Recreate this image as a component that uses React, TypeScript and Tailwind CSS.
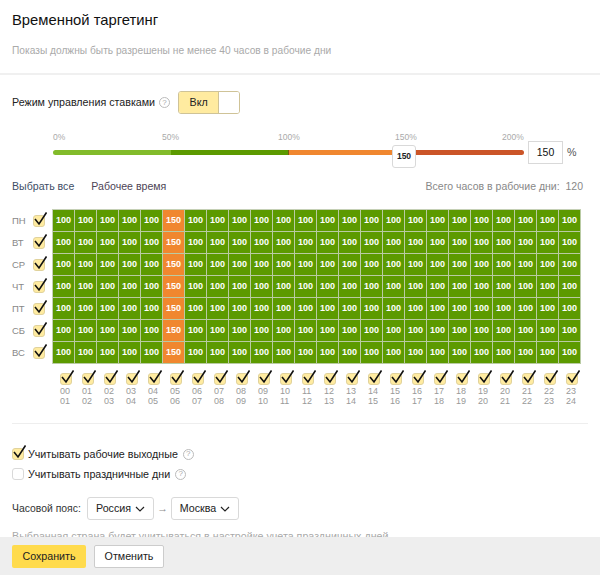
const days = ["ПН", "ВТ", "СР", "ЧТ", "ПТ", "СБ", "ВС"];
const hours = Array.from({ length: 24 }, (_, i) => i);

function pad(n: number) {
  return String(n).padStart(2, "0");
}

function Check({ checked = true }: { checked?: boolean }) {
  return (
    <span
      className={`relative block h-[12px] w-[12px] shrink-0 rounded-[3px] border ${
        checked ? "border-[#e0d29c] bg-[#ffeba0]" : "border-[#d9d9d9] bg-white"
      }`}
    >
      {checked && (
        <svg viewBox="0 0 14 14" className="absolute -top-[4px] -left-[1px] h-[14px] w-[14px]">
          <path d="M2 7 L6 12 L13.5 0.5" fill="none" stroke="#111" strokeWidth="1.6" />
        </svg>
      )}
    </span>
  );
}

function Help() {
  return (
    <span className="flex h-[11px] w-[11px] shrink-0 items-center justify-center rounded-full border border-[#bbb] text-[8px] leading-none text-[#aaa]">
      ?
    </span>
  );
}

function Chevron() {
  return (
    <svg viewBox="0 0 10 6" className="h-[6px] w-[10px]">
      <path d="M1 1 L5 5 L9 1" fill="none" stroke="#222" strokeWidth="1.2" />
    </svg>
  );
}

function Select({ label, width }: { label: string; width: string }) {
  return (
    <span className={`flex h-[23px] items-center justify-center gap-[4px] rounded-[3px] border border-[#d9d9d9] bg-white text-[10.7px] text-[#222] ${width}`}>
      {label}
      <Chevron />
    </span>
  );
}

export default function App() {
  return (
    <div className="flex h-[575px] w-[600px] flex-col overflow-hidden bg-white font-['Liberation_Sans',Arial,sans-serif]">
      <div className="h-[537px] shrink-0 overflow-hidden">
        <div className="h-[75px] border-b-2 border-[#f0f0f0] px-3 pt-[11px]">
          <h1 className="text-[14.8px] leading-[18px] font-normal text-[#111]">Временной таргетинг</h1>
          <p className="mt-[15px] text-[10.2px] leading-[14px] text-[#aaa]">
            Показы должны быть разрешены не менее 40 часов в рабочие дни
          </p>
        </div>

        <div className="mt-[16px] flex items-center px-3">
          <span className="text-[10.7px] text-[#222]">Режим управления ставками</span>
          <span className="ml-[4px]"><Help /></span>
          <span className="ml-[8px] flex h-[23px] w-[62px] overflow-hidden rounded-[3px] border border-[#cfc397]">
            <span className="flex w-[39px] items-center justify-center bg-[#ffeba0] text-[10.7px] text-[#222]">Вкл</span>
            <span className="flex-1 border-l border-[#cfc397] bg-white" />
          </span>
        </div>

        <div className="relative mt-[17px] h-[36px]">
          {[
            ["0%", "left-[53px]"],
            ["50%", "left-[162px]"],
            ["100%", "left-[278px]"],
            ["150%", "left-[395px]"],
            ["200%", "left-[502px]"],
          ].map(([t, pos]) => (
            <span key={t} className={`absolute top-[1px] text-[8.5px] leading-[11px] text-[#aaa] ${pos}`}>
              {t}
            </span>
          ))}
          <div className="absolute top-[19px] left-[53px] flex h-[5px] w-[471px] overflow-hidden rounded-full">
            <span className="w-[118px] bg-[#82bb2b]" />
            <span className="w-[118px] border-r border-[#7a5a10] bg-[#5c9a00]" />
            <span className="w-[118px] bg-[#f0872f]" />
            <span className="flex-1 bg-[#cb5528]" />
          </div>
          <span className="absolute top-[14px] left-[392px] flex h-[23px] w-[24px] items-center justify-center rounded-[3px] border border-[#d9d9d9] bg-white text-[8.5px] font-bold text-[#222]">
            150
          </span>
          <span className="absolute top-[10px] left-[528px] flex h-[23px] w-[35px] items-center justify-center border border-[#d9d9d9] bg-white text-[10.5px] text-[#111]">
            150
          </span>
          <span className="absolute top-[14px] left-[567px] text-[10.7px] leading-[14px] text-[#555]">%</span>
        </div>

        <div className="mt-[12px] flex items-center px-3 text-[10.6px] leading-[14px]">
          <span className="text-[#3d4d66]">Выбрать все</span>
          <span className="ml-[17px] text-[#4d4455]">Рабочее время</span>
          <span className="mr-[5px] ml-auto text-[10.5px] text-[#888]">Всего часов в рабочие дни:&nbsp; 120</span>
        </div>

        <div className="mt-[16px] flex pl-3">
          <div className="mt-[1px] flex w-[40px] flex-col">
            {days.map((d) => (
              <div key={d} className="flex h-[22px] items-center">
                <span className="w-[21px] text-[9.5px] text-[#888]">{d}</span>
                <Check />
              </div>
            ))}
          </div>
          <div className="grid grid-cols-[repeat(24,22px)] grid-rows-[repeat(7,22px)] border-t border-l border-[#c5d0b5]">
            {days.map((d) =>
              hours.map((h) => (
                <span
                  key={d + h}
                  className={`flex items-center justify-center border-r border-b border-[#b9cba3] text-[9px] font-bold text-white ${
                    h === 5 ? "bg-[#f0872f]" : "bg-[#5c9a00]"
                  }`}
                >
                  {h === 5 ? 150 : 100}
                </span>
              )),
            )}
          </div>
        </div>

        <div className="mt-[9px] ml-[53px] grid grid-cols-[repeat(24,22px)]">
          {hours.map((h) => (
            <div key={h} className="flex flex-col items-start pl-[7px]">
              <Check />
              <span className="mt-[1px] text-[9px] leading-[10px] text-[#999]">
                {pad(h)}
                <br />
                {pad(h + 1)}
              </span>
            </div>
          ))}
        </div>

        <div className="mx-3 mt-[17px] border-t border-[#eee]" />

        <div className="mt-[23px] flex items-center gap-[4px] px-3 text-[10.7px] leading-[14px] text-[#222]">
          <Check />
          <span>Учитывать рабочие выходные</span>
          <span className="ml-[1px]"><Help /></span>
        </div>
        <div className="mt-[6px] flex items-center gap-[4px] px-3 text-[10.7px] leading-[14px] text-[#222]">
          <Check checked={false} />
          <span>Учитывать праздничные дни</span>
          <span className="ml-[1px]"><Help /></span>
        </div>

        <div className="mt-[16px] flex items-center px-3">
          <span className="w-[69px] text-[10.4px] whitespace-nowrap text-[#333]">Часовой пояс:</span>
          <span className="ml-[6px]"><Select label="Россия" width="w-[67px]" /></span>
          <span className="w-[17px] text-center text-[10.7px] text-[#888]">→</span>
          <Select label="Москва" width="w-[68px]" />
        </div>

        <p className="mt-[9px] px-3 text-[10.7px] leading-[14px] text-[#aaa]">
          Выбранная страна будет учитываться в настройке учета праздничных дней
        </p>
      </div>

      <div className="flex flex-1 items-start gap-2 bg-[#eeeeee] px-3 pt-[8px]">
        <button className="flex h-[23px] w-[74px] items-center justify-center rounded-[2px] bg-[#ffdb4d] text-[10.7px] text-[#222]">Сохранить</button>
        <button className="flex h-[23px] w-[70px] items-center justify-center rounded-[2px] border border-[#ccc] bg-white text-[10.7px] text-[#222]">Отменить</button>
      </div>
    </div>
  );
}
